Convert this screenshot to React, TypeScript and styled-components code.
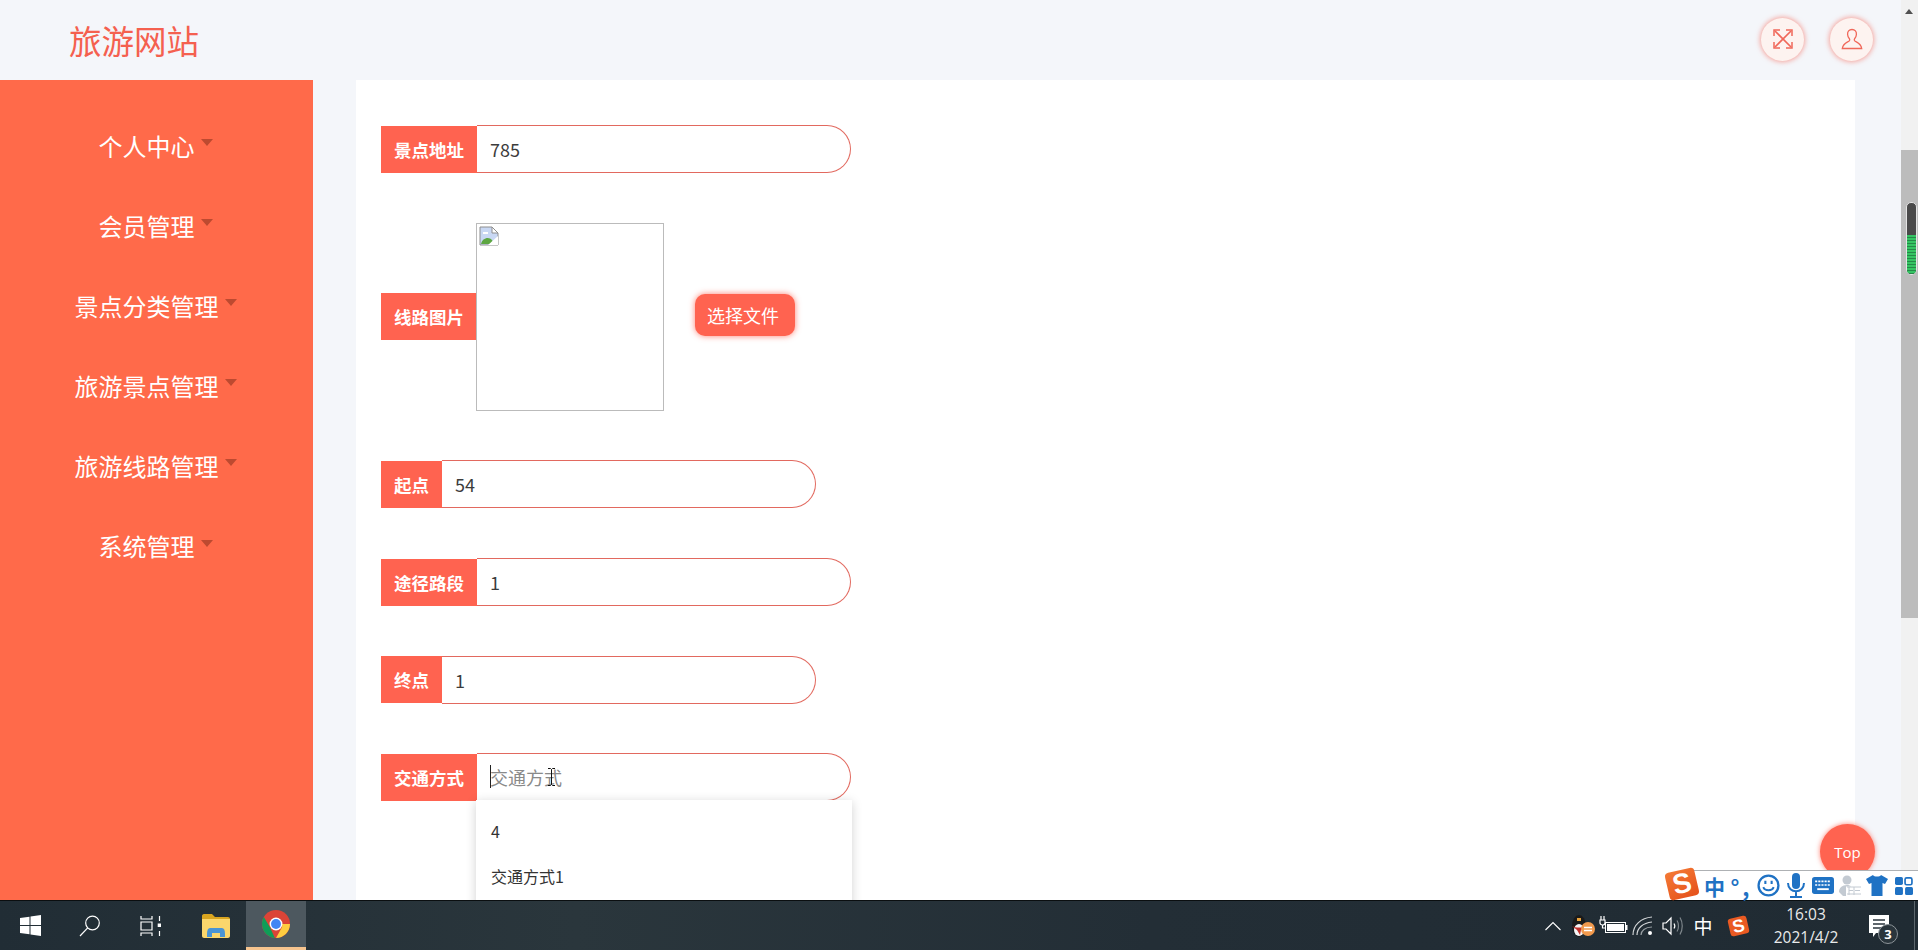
import React from "react";
import styled, { createGlobalStyle } from "styled-components";

const FONT = `"Noto Sans CJK SC", "Open Sans", sans-serif`;
const ACCENT = "#ff6350";
const BLUE = "#1f72c4";

const Global = createGlobalStyle`
  html, body { margin: 0; padding: 0; height: 100%; overflow: hidden; background: #f4f6fa; }
  * { box-sizing: border-box; }
`;

const Page = styled.div`
  position: relative;
  width: 1918px;
  height: 950px;
  overflow: hidden;
  display: flex;
  flex-direction: column;
  font-family: ${FONT};
`;
const Window = styled.div`
  flex: 1;
  min-height: 0;
  display: flex;
`;
const Viewport = styled.div`
  flex: 1;
  min-width: 0;
  display: flex;
  flex-direction: column;
`;
const Header = styled.header`
  height: 80px;
  flex: none;
  display: flex;
  align-items: center;
  justify-content: space-between;
  background: #f4f6fa;
  padding: 0 28px 2px 69px;
`;
const Logo = styled.div`
  font-size: 32.5px;
  line-height: 40px;
  margin-top: 2px;
  color: #f4604f;
`;
const HeaderActions = styled.div`
  display: flex;
  gap: 26px;
`;
const RoundButton = styled.div`
  width: 43px;
  height: 43px;
  border-radius: 50%;
  background: #fdf3f0;
  box-shadow: 0 0 5px 1px rgba(246, 110, 95, 0.6);
  display: flex;
  align-items: center;
  justify-content: center;
`;
const Body = styled.div`
  flex: 1;
  min-height: 0;
  display: flex;
  overflow: hidden;
`;
const Sidebar = styled.nav`
  width: 313px;
  flex: none;
  background: #ff6a4a;
  padding-top: 25px;
`;
const NavItem = styled.div`
  height: 80.1px;
  display: flex;
  align-items: center;
  justify-content: center;
  gap: 6px;
  padding-right: 2px;
  color: #fff;
  font-size: 24px;
`;
const Caret = styled.span`
  width: 0;
  height: 0;
  border-left: 6.5px solid transparent;
  border-right: 6.5px solid transparent;
  border-top: 7px solid #bd4a30;
  margin-bottom: 5px;
`;
const Main = styled.main`
  flex: 1;
  min-width: 0;
  padding: 0 46px 0 43px;
`;
const Card = styled.section`
  height: 100%;
  background: #fff;
  padding: 45px 25px 0;
  display: flex;
  flex-direction: column;
  gap: 49.7px;
`;
const Row = styled.div`
  position: relative;
  display: flex;
  align-items: center;
`;
const Label = styled.div<{ $chars: number }>`
  width: ${(p) => (p.$chars === 2 ? 61 : 96)}px;
  height: 47px;
  flex: none;
  background: ${ACCENT};
  color: #fff;
  font-size: 17.5px;
  font-weight: 700;
  display: flex;
  align-items: center;
  justify-content: center;
`;
const Field = styled.div<{ $placeholder?: boolean }>`
  position: relative;
  width: 374px;
  height: 48px;
  border: 1px solid #e2695f;
  border-left: none;
  border-radius: 0 24px 24px 0;
  padding-left: 13px;
  display: flex;
  align-items: center;
  font-size: 18px;
  color: ${(p) => (p.$placeholder ? "#8a8a8a" : "#3c3c3c")};
  background: #fff;
`;
const TextCaret = styled.span`
  position: absolute;
  left: 13px;
  top: 11px;
  width: 1px;
  height: 23px;
  background: #222;
`;
const IBeam = styled.svg`
  position: absolute;
  left: 70px;
  top: 14px;
`;
const Preview = styled.div`
  width: 188px;
  height: 188px;
  border: 1px solid #bbb;
  padding: 2px;
  margin-left: -1px;
  background: #fff;
`;
const UploadButton = styled.div`
  width: 100px;
  height: 42px;
  margin: 0 0 3px 31px;
  padding-right: 4px;
  border-radius: 10px;
  background: ${ACCENT};
  box-shadow: 0 0 6px rgba(255, 99, 80, 0.8);
  color: #fff;
  font-size: 18px;
  display: flex;
  align-items: center;
  justify-content: center;
`;
const Dropdown = styled.ul`
  position: absolute;
  left: 95px;
  top: 47px;
  width: 376px;
  margin: 0;
  padding: 8px 0 0;
  height: 140px;
  list-style: none;
  background: #fff;
  box-shadow: 0 2px 10px rgba(0, 0, 0, 0.18);
`;
const DropdownItem = styled.li`
  height: 45px;
  padding-left: 15px;
  display: flex;
  align-items: center;
  font-size: 16px;
  color: #333;
`;
const Scrollbar = styled.div`
  position: relative;
  width: 17px;
  flex: none;
  background: #f1f1f1;
  padding-top: 150px;
`;
const ScrollArrow = styled.span`
  position: absolute;
  left: 4px;
  top: 9px;
  width: 0;
  height: 0;
  border-left: 4.5px solid transparent;
  border-right: 4.5px solid transparent;
  border-bottom: 5px solid #505050;
`;
const ScrollThumb = styled.div`
  height: 468px;
  background: #bcbcbc;
`;
const Meter = styled.div`
  position: absolute;
  right: 1px;
  top: 202px;
  width: 11px;
  height: 73px;
  border: 1px solid #e4e4e4;
  border-radius: 5px;
  overflow: hidden;
  display: flex;
  flex-direction: column;
  background: #4a4a4a;
`;
const MeterFill = styled.div`
  margin-top: 32px;
  flex: 1;
  background: repeating-linear-gradient(to bottom, #35c463 0 2px, #248a48 2px 3px);
`;
const TopButton = styled.div`
  position: absolute;
  left: 1820px;
  top: 824px;
  width: 55px;
  height: 55px;
  border-radius: 50%;
  background: ${ACCENT};
  box-shadow: 0 0 5px rgba(255, 99, 80, 0.8);
  color: #fff;
  font-family: "Open Sans", sans-serif;
  font-size: 15px;
  display: flex;
  align-items: center;
  justify-content: center;
`;
const ImeBar = styled.div`
  position: absolute;
  right: 0;
  bottom: 50px;
  width: 225px;
  height: 30px;
  background: #fff;
  border-top: 1px solid #aeb1b4;
  padding-left: 8px;
  display: flex;
  align-items: center;
`;
const ImeLogo = styled.div`
  position: absolute;
  left: -26px;
  top: -1px;
  width: 30px;
  height: 28px;
  border-radius: 4px;
  background: linear-gradient(160deg, #f47a35, #e5511b);
  transform: rotate(-13deg);
  color: #fff;
  font-family: "Liberation Sans", sans-serif;
  font-weight: 700;
  font-size: 28px;
  line-height: 28px;
  text-align: center;
`;
const ImeSlot = styled.div<{ $size?: number; $spread?: number }>`
  width: 27px;
  height: 28px;
  flex: none;
  display: flex;
  align-items: center;
  justify-content: center;
  color: ${BLUE};
  font-weight: 700;
  font-size: ${(p) => p.$size ?? 20}px;
  letter-spacing: ${(p) => p.$spread ?? 0}px;
`;
const Taskbar = styled.footer`
  height: 50px;
  flex: none;
  display: flex;
  justify-content: space-between;
  background: linear-gradient(90deg, #212d35, #2a363c 30%, #232e36 60%, #202b33);
  border-top: 1px solid #0a0e10;
`;
const TaskGroup = styled.div`
  display: flex;
`;
const TaskButton = styled.div<{ $active?: boolean; $offset?: number }>`
  width: 60px;
  height: 49px;
  margin-left: ${(p) => p.$offset ?? 0}px;
  display: flex;
  align-items: center;
  justify-content: center;
  background: ${(p) => (p.$active ? "#4d585f" : "transparent")};
  border-bottom: ${(p) => (p.$active ? "3px solid #f6c48e" : "none")};
`;
const Tray = styled.div`
  display: flex;
  align-items: center;
`;
const TraySlot = styled.div<{ $offset?: number }>`
  width: 30px;
  margin-left: ${(p) => p.$offset ?? 0}px;
  height: 49px;
  display: flex;
  align-items: center;
  justify-content: center;
  color: #fff;
  font-size: 19px;
`;
const TrayLogo = styled.div`
  width: 19px;
  height: 18px;
  border-radius: 3px;
  background: #ea5a22;
  transform: rotate(-13deg);
  color: #fff;
  font-family: "Liberation Sans", sans-serif;
  font-weight: 700;
  font-size: 18px;
  line-height: 18px;
  text-align: center;
`;
const Clock = styled.div`
  width: 76px;
  margin-left: 15px;
  display: flex;
  flex-direction: column;
  align-items: center;
  gap: 5px;
  color: #e9eaea;
  font-family: "Open Sans", sans-serif;
  font-size: 15.5px;
  line-height: 18px;
`;
const Notice = styled.div`
  position: relative;
  width: 48px;
  margin-left: 12px;
  height: 49px;
  display: flex;
  align-items: center;
  padding-left: 13px;
`;
const NoticeBadge = styled.span`
  position: absolute;
  left: 22px;
  top: 23px;
  width: 20px;
  height: 20px;
  border-radius: 50%;
  border: 1px solid #8d9499;
  background: #2a353c;
  color: #fff;
  font-family: "Open Sans", sans-serif;
  font-weight: 700;
  font-size: 13px;
  display: flex;
  align-items: center;
  justify-content: center;
`;
const DesktopEdge = styled.div`
  width: 14px;
  height: 49px;
  border-left: 1px solid #5c666c;
  transform: translateX(10px);
`;

const ExpandIcon = () => (
  <svg width="20" height="20" viewBox="0 0 20 20" fill="none" stroke="#f0685a" strokeWidth="1.7">
    <path d="M2 2 18 18M18 2 2 18" />
    <path d="M1 7V1H7M13 1h6v6M19 13v6h-6M7 19H1v-6" strokeWidth="1.5" />
  </svg>
);
const UserIcon = () => (
  <svg width="22" height="22" viewBox="0 0 22 22" fill="none" stroke="#f0685a" strokeWidth="1.3">
    <path d="M11 1.5c-3 0-4.6 2.2-4.4 5 .1 2 1 3.300 1.800 4.200.5.700.3 1.900-.5 2.500-1.700 1.200-5.800 2.200-6.600 7.300h19.400c-.8-5.100-4.900-6.100-6.600-7.300-.8-.6-1-1.800-.5-2.500.8-.9 1.700-2.200 1.800-4.200.2-2.800-1.400-5-4.400-5z" />
  </svg>
);
const BrokenImage = () => (
  <svg width="20" height="20" viewBox="0 0 20 20">
    <path d="M1 1h12l6 6v12H1z" fill="#c9d8f4" stroke="#8e8e8e" />
    <path d="M13 1v6h6z" fill="#fff" stroke="#8e8e8e" />
    <path d="M2 18c1-6 8-8 11-4l2 4z" fill="#5da642" />
    <path d="M9 19 19 10v9z" fill="#fff" />
    <path d="M4 7h5" stroke="#fff" strokeWidth="2" />
  </svg>
);
const WindowsIcon = () => (
  <svg width="21" height="21" viewBox="0 0 21 21" fill="#fff">
    <path d="M0 3 9.500 1.700V10H0zM10.500 1.500 21 0V10H10.500zM0 11H9.500V19.300L0 18zM10.500 11H21V21L10.500 19.500z" />
  </svg>
);
const SearchIcon = () => (
  <svg width="22" height="22" viewBox="0 0 22 22" fill="none" stroke="#fff" strokeWidth="1.2">
    <circle cx="13.500" cy="8" r="6.800" />
    <path d="M8.700 12.800 1 21" />
  </svg>
);
const TaskViewIcon = () => (
  <svg width="21" height="20" viewBox="0 0 21 20" fill="none" stroke="#fff" strokeWidth="1.2">
    <path d="M1 0v3h11V0M1 6h11v8H1zM1 20v-3h11v3M19.500 0v5M19.500 15v5" />
    <rect x="17.700" y="7.500" width="3.300" height="3.500" fill="#fff" stroke="none" />
  </svg>
);
const FolderIcon = () => (
  <svg width="28" height="24" viewBox="0 0 28 24">
    <path d="M0 2c0-1 .6-2 2-2h8l3 3h13c1 0 2 .8 2 2v2H0z" fill="#d9a520" />
    <path d="M0 5h28v17c0 1-1 2-2 2H2c-1 0-2-1-2-2z" fill="#fbd66c" />
    <path d="M5 23v-3c0-4 1-6 3-6h12c2 0 3 2 3 6v3h-5v-4h-8v4z" fill="#4a94d4" />
  </svg>
);
const ChromeIcon = () => (
  <svg width="28" height="28" viewBox="0 0 48 48">
    <circle cx="24" cy="24" r="24" fill="#db4437" />
    <path d="M24 48C10.700 48 0 37.300 0 24c0-4.400 1.200-8.500 3.200-12L14 30.500 22 48z" fill="#0f9d58" />
    <path d="M24 48l10-18c.5-1 1-4 0-6h13c.6 0 1 0 1 0 0 13.300-10.700 24-24 24z" fill="#ffcd40" />
    <circle cx="24" cy="24" r="11" fill="#fff" />
    <circle cx="24" cy="24" r="8.500" fill="#4285f4" />
  </svg>
);
const QqIcon = () => (
  <svg width="26" height="24" viewBox="0 0 26 24">
    <ellipse cx="9" cy="12" rx="7" ry="11" fill="#1a1a1a" />
    <ellipse cx="9" cy="16" rx="5" ry="6" fill="#f5f5f5" />
    <path d="M2 12c4 2 10 2 14 0l-1 4-4 0-1 5-3-5z" fill="#c4302b" />
    <path d="M7 4h4v3H7z" fill="#e9a23b" />
    <circle cx="18" cy="15" r="7" fill="#f29a4d" />
    <path d="M14 13.500h8M14 16.500h8" stroke="#fff" strokeWidth="1.300" />
  </svg>
);
const BatteryIcon = () => (
  <svg width="30" height="20" viewBox="0 0 30 20" fill="none" stroke="#fff">
    <rect x="7.500" y="6.500" width="20" height="10" />
    <rect x="9" y="8" width="17" height="7" fill="#fff" stroke="none" />
    <rect x="27.500" y="9" width="2" height="5" fill="#fff" stroke="none" />
    <path d="M3 0v4M6 0v4M2 4h5v3c0 1-1 2-2.500 2S2 8 2 7zM4.500 9v3h3" strokeWidth="1.200" />
  </svg>
);
const WifiIcon = () => (
  <svg width="22" height="20" viewBox="0 0 22 20" fill="none" stroke="#d5d8da" strokeWidth="1.200">
    <path d="M1 19C1 9 9 2 20 1" />
    <path d="M5 19c0-7 6-12 15-13" />
    <path d="M9 19c0-4 4-8 11-8" stroke="#9aa0a4" />
    <circle cx="18" cy="17" r="2" fill="#fff" stroke="none" />
  </svg>
);
const SoundIcon = () => (
  <svg width="22" height="20" viewBox="0 0 22 20" fill="none" stroke="#fff" strokeWidth="1.200">
    <path d="M1 7h3l5-5v16l-5-5H1z" />
    <path d="M12 7.500c1 1.500 1 3.500 0 5" />
    <path d="M15 4.500c2 3 2 8 0 11" stroke="#7e868b" />
    <path d="M18 1.500c3 5 3 12 0 17" stroke="#7e868b" />
  </svg>
);
const NoticeBubble = () => (
  <svg width="21" height="22" viewBox="0 0 21 22">
    <path d="M0 0h20v18H7l-3 4v-4H0z" fill="#fff" />
    <path d="M4 5h12M4 9h12M4 13h8" stroke="#2a353c" strokeWidth="1.300" />
  </svg>
);
const SmileIcon = () => (
  <svg width="23" height="23" viewBox="0 0 22 22" fill="none" stroke={BLUE} strokeWidth="2.200">
    <circle cx="11" cy="11" r="9.500" />
    <path d="M6 12.500c1.500 4 8.500 4 10 0" strokeWidth="1.800" />
    <path d="M8 6.500v3M14 6.500v3" strokeWidth="2" />
  </svg>
);
const MicIcon = () => (
  <svg width="18" height="25" viewBox="0 0 18 25" fill="none" stroke={BLUE} strokeWidth="2">
    <rect x="5" y="0" width="8" height="16" rx="4" fill={BLUE} stroke="none" />
    <path d="M1 10c0 11 16 11 16 0M9 18v5M3 24h12" />
  </svg>
);
const KeyboardIcon = () => (
  <svg width="22" height="17" viewBox="0 0 21 16">
    <rect x="0" y="0" width="21" height="16" rx="2.500" fill={BLUE} />
    <path d="M3 4h15M3 7.500h15" stroke="#fff" strokeWidth="1.600" strokeDasharray="2 1" />
    <path d="M5 11.500h11" stroke="#fff" strokeWidth="1.800" />
  </svg>
);
const PersonIcon = () => (
  <svg width="22" height="22" viewBox="0 0 22 22" fill="#c3cad2">
    <circle cx="8" cy="5" r="4.500" />
    <path d="M0 17c0-4 3-7 8-7 2 0 3 .5 4 1.500H7V21H4z" />
    <path d="M8 12h14M10 15.500h4M16 15.500h5M8 19h14M10 12v8M15 12v8" stroke="#c3cad2" fill="none" />
  </svg>
);
const ShirtIcon = () => (
  <svg width="22" height="21" viewBox="0 0 22 21" fill={BLUE}>
    <path d="M7 0c1 2 7 2 8 0l7 4-3 5-2.500-1v13h-11V8L3 9 0 4z" />
  </svg>
);
const GridIcon = () => (
  <svg width="18" height="18" viewBox="0 0 17 17" fill={BLUE}>
    <rect x="0" y="0" width="7.500" height="7.500" rx="1.500" />
    <rect x="9.500" y="0.800" width="6.500" height="6.500" rx="1.500" fill="none" stroke={BLUE} strokeWidth="1.600" />
    <rect x="0" y="9.500" width="7.500" height="7.500" rx="1.500" />
    <rect x="9.500" y="9.500" width="7.500" height="7.500" rx="1.500" />
  </svg>
);

const navItems = ["个人中心", "会员管理", "景点分类管理", "旅游景点管理", "旅游线路管理", "系统管理"];

export default function App() {
  return (
    <Page>
      <Global />
      <Window>
        <Viewport>
          <Header>
            <Logo>旅游网站</Logo>
            <HeaderActions>
              <RoundButton><ExpandIcon /></RoundButton>
              <RoundButton><UserIcon /></RoundButton>
            </HeaderActions>
          </Header>
          <Body>
            <Sidebar>
              {navItems.map((n) => (
                <NavItem key={n}>
                  {n}
                  <Caret />
                </NavItem>
              ))}
            </Sidebar>
            <Main>
              <Card>
                <Row>
                  <Label $chars={4}>景点地址</Label>
                  <Field>785</Field>
                </Row>
                <Row>
                  <Label $chars={4}>线路图片</Label>
                  <Preview><BrokenImage /></Preview>
                  <UploadButton>选择文件</UploadButton>
                </Row>
                <Row>
                  <Label $chars={2}>起点</Label>
                  <Field>54</Field>
                </Row>
                <Row>
                  <Label $chars={4}>途径路段</Label>
                  <Field>1</Field>
                </Row>
                <Row>
                  <Label $chars={2}>终点</Label>
                  <Field>1</Field>
                </Row>
                <Row>
                  <Label $chars={4}>交通方式</Label>
                  <Field $placeholder>
                    <TextCaret />
                    交通方式
                    <IBeam width="9" height="18" viewBox="0 0 9 18" fill="none" stroke="#111" strokeWidth="1">
                      <path d="M1 .5h2.500L4.500 1.500 5.500.5H8M4.500 1.500v15M1 17.500h2.500l1-1 1 1H8" />
                    </IBeam>
                  </Field>
                  <Dropdown>
                    <DropdownItem>4</DropdownItem>
                    <DropdownItem>交通方式1</DropdownItem>
                  </Dropdown>
                </Row>
              </Card>
            </Main>
          </Body>
        </Viewport>
        <Scrollbar>
          <ScrollArrow />
          <ScrollThumb />
          <Meter><MeterFill /></Meter>
        </Scrollbar>
      </Window>
      <TopButton>Top</TopButton>
      <ImeBar>
        <ImeLogo>S</ImeLogo>
        <ImeSlot $size={21}>中</ImeSlot>
        <ImeSlot $size={22} $spread={3}>°,</ImeSlot>
        <ImeSlot><SmileIcon /></ImeSlot>
        <ImeSlot><MicIcon /></ImeSlot>
        <ImeSlot><KeyboardIcon /></ImeSlot>
        <ImeSlot><PersonIcon /></ImeSlot>
        <ImeSlot><ShirtIcon /></ImeSlot>
        <ImeSlot><GridIcon /></ImeSlot>
      </ImeBar>
      <Taskbar>
        <TaskGroup>
          <TaskButton><WindowsIcon /></TaskButton>
          <TaskButton><SearchIcon /></TaskButton>
          <TaskButton><TaskViewIcon /></TaskButton>
          <TaskButton $offset={6}><FolderIcon /></TaskButton>
          <TaskButton $active><ChromeIcon /></TaskButton>
        </TaskGroup>
        <Tray>
          <TraySlot>
            <svg width="16" height="10" viewBox="0 0 16 10" fill="none" stroke="#fff" strokeWidth="1.100"><path d="M.5 9 8 1.500 15.500 9" /></svg>
          </TraySlot>
          <TraySlot><QqIcon /></TraySlot>
          <TraySlot><BatteryIcon /></TraySlot>
          <TraySlot><WifiIcon /></TraySlot>
          <TraySlot><SoundIcon /></TraySlot>
          <TraySlot>中</TraySlot>
          <TraySlot $offset={5}><TrayLogo>S</TrayLogo></TraySlot>
          <Clock>
            <span>16:03</span>
            <span>2021/4/2</span>
          </Clock>
          <Notice>
            <NoticeBubble />
            <NoticeBadge>3</NoticeBadge>
          </Notice>
          <DesktopEdge />
        </Tray>
      </Taskbar>
    </Page>
  );
}
